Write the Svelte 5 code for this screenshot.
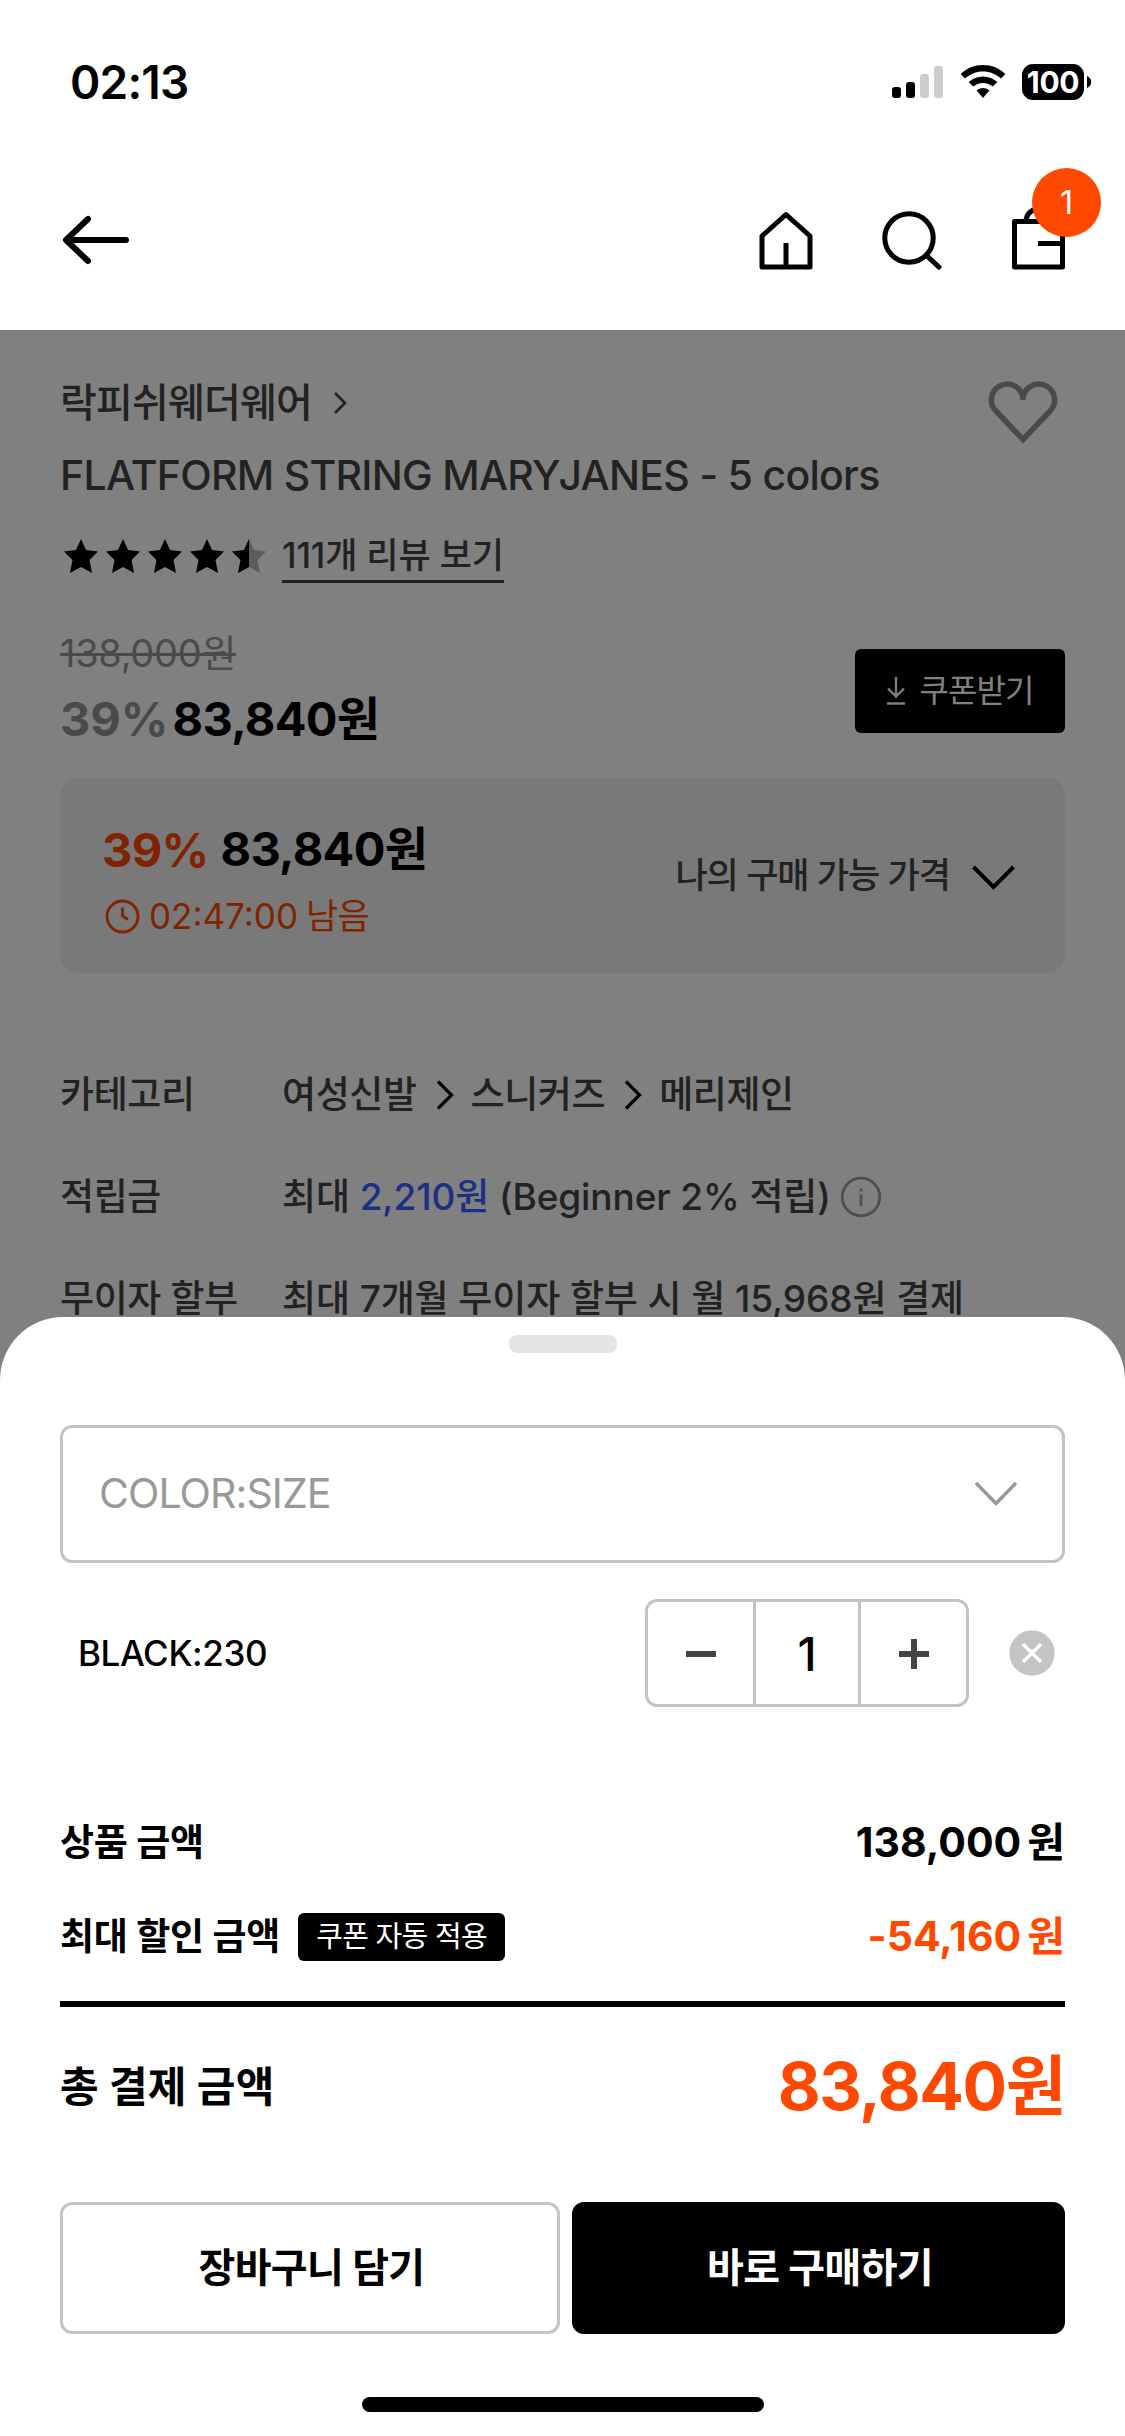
<script>
  const stars = [1, 1, 1, 1, 0.5];
  const categories = ['여성신발', '스니커즈', '메리제인'];
  let quantity = $state(1);
</script>

<div class="screen">
  <div class="status">
    <span class="time">02:13</span>
    <div class="status-icons">
      <svg width="52" height="36" viewBox="0 0 52 36">
        <rect x="0" y="23" width="9" height="11" rx="3" />
        <rect x="14" y="18" width="9" height="16" rx="3" />
        <rect x="28" y="10" width="9" height="24" rx="3" fill="#ccc" />
        <rect x="42" y="2" width="9" height="32" rx="3" fill="#ccc" />
      </svg>
      <svg class="wifi" width="46" height="36" viewBox="0 0 46 36">
        <path d="M23 1C14.500 1 6.500 4.300.700 9.900L5 14.600C9.700 10.200 16 7.500 23 7.500S36.300 10.200 41 14.600L45.300 9.900C39.500 4.300 31.500 1 23 1Z" />
        <path d="M23 12.500C17.500 12.500 12.500 14.600 8.700 18L13.200 22.600C15.800 20.300 19.200 18.900 23 18.900S30.200 20.300 32.800 22.600L37.300 18C33.500 14.600 28.500 12.500 23 12.500Z" />
        <path d="M23 24C20.500 24 18.300 24.900 16.600 26.500L23 34L29.400 26.500C27.700 24.900 25.500 24 23 24Z" />
      </svg>
      <span class="battery">100</span>
      <svg width="5" height="12" viewBox="0 0 5 12"><path d="M0 0C2.500 1 4.200 3 4.200 6S2.500 11 0 12Z" /></svg>
    </div>
  </div>

  <header class="nav">
    <svg class="line" width="70" height="52" viewBox="0 0 70 52">
      <path d="M28 5L6 26L28 47M7 26H66" stroke-width="6" stroke-linecap="round" stroke-linejoin="round" />
    </svg>
    <div class="nav-icons">
      <svg class="line" width="54" height="60" viewBox="0 0 54 60">
        <path d="M3 26L27 4.500L51 26V57H3ZM27 33V57" stroke-width="5" stroke-linejoin="round" />
      </svg>
      <svg class="line" width="62" height="60" viewBox="0 0 62 60">
        <circle cx="28" cy="28" r="24.200" stroke-width="5" />
        <path d="M45 45L59.500 58.500" stroke-width="5" />
      </svg>
      <div class="bag">
        <svg class="line" width="54" height="64" viewBox="0 0 54 64">
          <path d="M2.500 15.500H50.500V61H2.500ZM26 37.500H50M14 15C15 -1 38 -1 39 15" stroke-width="5" stroke-linejoin="round" />
        </svg>
        <span class="badge">1</span>
      </div>
    </div>
  </header>

  <main class="product">
    <div class="heading">
      <div>
        <div class="brand">
          <span>락피쉬웨더웨어</span>
          <svg class="line" width="16" height="26" viewBox="0 0 16 26"><path d="M3 3L13 13L3 23" stroke="#222" stroke-width="2.600" /></svg>
        </div>
        <h1>FLATFORM STRING MARYJANES - 5 colors</h1>
      </div>
      <svg class="line heart" width="72" height="66" viewBox="0 0 72 66">
        <path d="M36 20A15.800 15.800 0 1 0 9 31L36 59.500L63 31A15.800 15.800 0 1 0 36 20" stroke="#4a4a4a" stroke-width="5.500" />
      </svg>
    </div>

    <div class="rating">
      <div class="stars">
        {#each stars as fill}
          <svg width="34" height="34" viewBox="0 0 34 34">
            <path fill={fill < 1 ? '#5c5c5c' : '#000'} d="M17 0L22 11L34 12.500L25.500 21L28 34L17 28L6 34L8.500 21L0 12.500L12 11Z" />
            {#if fill < 1}<path d="M17 0V28L6 34L8.500 21L0 12.500L12 11Z" />{/if}
          </svg>
        {/each}
      </div>
      <a class="reviews" href="#reviews">111개 리뷰 보기</a>
    </div>

    <div class="price-row">
      <div>
        <div class="old-price">138,000원</div>
        <div class="price"><span class="rate">39%</span><span class="won">83,840원</span></div>
      </div>
      <button class="coupon">
        <svg class="line" width="20" height="30" viewBox="0 0 20 30"><path d="M10 1V20M2 12.500L10 20.500L18 12.500M1 27.500H19" stroke="#808080" stroke-width="2.300" /></svg>
        <span>쿠폰받기</span>
      </button>
    </div>

    <section class="deal">
      <div>
        <div class="deal-price"><span class="rate">39%</span><span class="won">83,840원</span></div>
        <div class="timer">
          <svg class="line" width="35" height="35" viewBox="0 0 35 35">
            <circle cx="17.500" cy="17.500" r="15.500" stroke="#802400" stroke-width="2.800" />
            <path d="M17.500 8.500V17L23 20.500" stroke="#802400" stroke-width="2.800" />
          </svg>
          <span>02:47:00</span><span class="left">남음</span>
        </div>
      </div>
      <div class="mine">
        <span>나의 구매 가능 가격</span>
        <svg class="line" width="44" height="28" viewBox="0 0 44 28"><path d="M1.500 4L21.500 24L41.500 4" stroke-width="4" /></svg>
      </div>
    </section>

    <dl class="info">
      <dt>카테고리</dt>
      <dd class="crumbs">
        {#each categories as name, i}
          {#if i > 0}
            <svg class="line" width="20" height="32" viewBox="0 0 20 32"><path d="M3 2.500L16.500 16L3 29.500" stroke-width="3.200" /></svg>
          {/if}
          <span>{name}</span>
        {/each}
      </dd>
      <dt>적립금</dt>
      <dd>
        <span>최대 <b>2,210원</b> (Beginner 2% 적립)</span>
        <svg class="line tip" width="42" height="42" viewBox="0 0 42 42">
          <circle cx="21" cy="21" r="18.800" stroke="#4f4f4f" stroke-width="2.800" />
          <path d="M21 18.500V30M21 12.500V15.500" stroke="#4f4f4f" stroke-width="2.800" />
        </svg>
      </dd>
      <dt>무이자 할부</dt>
      <dd>최대 7개월 무이자 할부 시 월 15,968원 결제</dd>
    </dl>
  </main>

  <section class="sheet">
    <div class="handle"></div>
    <div class="select">
      <span>COLOR:SIZE</span>
      <svg class="line" width="46" height="30" viewBox="0 0 46 30"><path d="M3 4L23 24.500L43 4" stroke="#999" stroke-width="3.500" /></svg>
    </div>

    <div class="option">
      <span class="option-name">BLACK:230</span>
      <div class="stepper">
        <button aria-label="minus" onclick={() => (quantity = Math.max(1, quantity - 1))}>
          <svg class="line" width="30" height="30" viewBox="0 0 30 30"><path d="M0 15H30" stroke="#444" stroke-width="6" /></svg>
        </button>
        <output>{quantity}</output>
        <button aria-label="plus" onclick={() => (quantity += 1)}>
          <svg class="line" width="30" height="30" viewBox="0 0 30 30"><path d="M0 15H30M15 0V30" stroke="#444" stroke-width="6" /></svg>
        </button>
      </div>
      <svg class="line remove" width="46" height="46" viewBox="0 0 46 46">
        <circle cx="23" cy="23" r="22.700" fill="#c4c4c4" />
        <path d="M14 14L32 32M32 14L14 32" stroke="#fff" stroke-width="3.500" />
      </svg>
    </div>

    <div class="sums">
      <div class="sum"><span class="label">상품 금액</span><span class="amount">138,000<i>원</i></span></div>
      <div class="sum">
        <span class="label">최대 할인 금액</span><span class="auto">쿠폰 자동 적용</span>
        <span class="amount orange">-54,160<i>원</i></span>
      </div>
    </div>
    <div class="total">
      <span class="total-label">총 결제 금액</span>
      <span class="total-amount">83,840원</span>
    </div>
    <div class="actions">
      <button class="cart">장바구니 담기</button>
      <button class="buy">바로 구매하기</button>
    </div>
    <div class="home-indicator"></div>
  </section>
</div>

<style>
  :global(body) {
    margin: 0;
    background: #fff;
  }
  .screen {
    width: 1125px;
    height: 2436px;
    overflow: hidden;
    display: flex;
    flex-direction: column;
    background: #fff;
    color: #000;
    font-family: Inter, 'Noto Sans CJK KR', sans-serif;
    line-height: 1.2;
    white-space: nowrap;
  }
  .screen * {
    box-sizing: border-box;
  }
  svg {
    display: block;
    flex: none;
  }
  .line {
    fill: none;
    stroke: #000;
  }
  button {
    font: inherit;
    color: inherit;
    letter-spacing: inherit;
    border: 0;
    padding: 0;
    margin: 0;
    background: none;
  }
  i {
    font-style: normal;
  }

  .status {
    height: 164px;
    padding: 0 33px 0 70px;
    display: flex;
    justify-content: space-between;
    align-items: center;
  }
  .time {
    padding-top: 2px;
    font-size: 46px;
    font-weight: 600;
    letter-spacing: -0.8px;
  }
  .status-icons {
    display: flex;
    align-items: center;
  }
  .wifi {
    margin: 0 16px;
  }
  .battery {
    width: 62px;
    height: 36px;
    margin-right: 3px;
    border-radius: 11px;
    background: #000;
    color: #fff;
    font-size: 30px;
    font-weight: 700;
    line-height: 36px;
    text-align: center;
    letter-spacing: -0.3px;
  }

  .nav {
    height: 166px;
    padding: 0 59px 14px 60px;
    display: flex;
    justify-content: space-between;
    align-items: center;
  }
  .nav-icons {
    display: flex;
    align-items: center;
  }
  .nav-icons > svg:nth-child(2) {
    margin: 0 69px 0 68px;
  }
  .bag {
    position: relative;
    margin-top: -4px;
  }
  .badge {
    position: absolute;
    left: 20px;
    top: -38px;
    width: 69px;
    height: 69px;
    border-radius: 50%;
    background: #ff4800;
    color: #fff;
    font-size: 32px;
    line-height: 69px;
    text-align: center;
  }

  .product {
    height: 1050px;
    flex: none;
    padding: 43px 60px 0;
    background: #808080;
    color: #222;
    font-weight: 500;
  }
  .heading {
    display: flex;
    justify-content: space-between;
    align-items: flex-start;
  }
  .brand {
    height: 60px;
    display: flex;
    align-items: center;
    gap: 20px;
    font-size: 40px;
    letter-spacing: -0.8px;
  }
  h1 {
    margin: 12px 0 0;
    font-size: 41px;
    font-weight: 500;
    line-height: 60px;
    letter-spacing: -0.72px;
  }
  .heart {
    margin: 7px 6px 0 0;
  }
  .rating {
    height: 60px;
    margin-top: 20px;
    padding-left: 4px;
    display: flex;
  }
  .stars {
    display: flex;
    gap: 8px;
    margin: 14px 16px 0 0;
  }
  .reviews {
    height: 58px;
    border-bottom: 3px solid #222;
    color: inherit;
    text-decoration: none;
    font-size: 35px;
    line-height: 61px;
    letter-spacing: -0.15px;
  }
  .price-row {
    margin-top: 43px;
    display: flex;
    justify-content: space-between;
    align-items: flex-start;
    font-weight: 400;
  }
  .old-price {
    color: #4a4a4a;
    font-size: 38px;
    line-height: 50px;
    letter-spacing: -0.3px;
    text-decoration: line-through;
    text-decoration-thickness: 3px;
  }
  .price,
  .deal-price {
    color: #000;
    font-size: 47px;
    font-weight: 700;
    line-height: 60px;
    display: flex;
  }
  .won {
    letter-spacing: -0.7px;
  }
  .price {
    margin-top: 11px;
    gap: 4px;
  }
  .price .rate {
    color: #4a4a4a;
  }
  .coupon {
    width: 210px;
    height: 84px;
    margin-top: 21px;
    border-radius: 6px;
    background: #000;
    color: #808080;
    display: flex;
    justify-content: center;
    align-items: center;
    gap: 13px;
    font-size: 32px;
    letter-spacing: -0.9px;
  }
  .deal {
    height: 195px;
    margin-top: 29px;
    padding: 41px 49px 0 42px;
    border-radius: 18px;
    background: #797979;
    display: flex;
    justify-content: space-between;
    align-items: flex-start;
  }
  .deal-price {
    gap: 12px;
  }
  .deal .rate {
    padding-top: 1px;
    color: #802400;
    letter-spacing: -0.7px;
  }
  .timer {
    height: 50px;
    margin-top: 11px;
    padding-left: 3px;
    display: flex;
    align-items: center;
    color: #802400;
    font-size: 35px;
    font-weight: 400;
  }
  .timer svg {
    margin-right: 9px;
  }
  .left {
    margin-left: 8px;
    letter-spacing: -0.8px;
  }
  .mine {
    height: 112px;
    display: flex;
    align-items: center;
    gap: 22px;
    font-size: 35px;
    letter-spacing: -1px;
  }
  .mine svg {
    margin-top: 4px;
  }
  .info {
    margin: 71px 0 0;
    display: grid;
    grid-template-columns: 222px 1fr;
    grid-auto-rows: 102px;
    align-items: center;
    font-size: 37px;
    letter-spacing: -0.4px;
  }
  .info dd {
    margin: 0;
    display: flex;
    align-items: center;
    letter-spacing: -0.1px;
  }
  .info .crumbs {
    letter-spacing: -0.4px;
  }
  .info b {
    font-weight: 500;
    color: #1c2f80;
  }
  .crumbs svg {
    margin: 0 16px 0 18px;
  }
  .tip {
    margin-left: 9px;
  }

  .sheet {
    position: relative;
    height: 1119px;
    flex: none;
    margin-top: -63px;
    padding: 18px 60px 0;
    border-radius: 63px 63px 0 0;
    background: #fff;
  }
  .handle {
    width: 108px;
    height: 18px;
    margin: 0 auto;
    border-radius: 8px;
    background: #e4e4e4;
  }
  .select {
    height: 138px;
    margin-top: 72px;
    padding: 0 43px 0 36px;
    border: 3px solid #c4c4c4;
    border-radius: 12px;
    display: flex;
    justify-content: space-between;
    align-items: center;
    color: #999;
    font-size: 41px;
    letter-spacing: -0.9px;
  }
  .option {
    height: 108px;
    margin-top: 36px;
    padding: 0 10px 0 18px;
    display: flex;
    align-items: center;
  }
  .option-name {
    flex: 1;
    font-size: 35px;
    font-weight: 500;
    letter-spacing: -0.4px;
  }
  .stepper {
    width: 324px;
    height: 108px;
    border: 3px solid #c4c4c4;
    border-radius: 12px;
    display: grid;
    grid-template-columns: 105px 108px 1fr;
  }
  .stepper button {
    display: grid;
    place-items: center;
  }
  .stepper output {
    border: solid #c4c4c4;
    border-width: 0 3px;
    font-size: 46px;
    font-weight: 500;
    line-height: 104px;
    text-align: center;
  }
  .remove {
    margin-left: 40px;
  }
  .remove circle {
    stroke: none;
  }
  .sums {
    margin-top: 88px;
    padding-bottom: 18px;
    border-bottom: 6px solid #000;
  }
  .sum {
    height: 94px;
    padding-top: 2px;
    display: flex;
    align-items: center;
  }
  .label {
    font-size: 37px;
    font-weight: 700;
    letter-spacing: -0.2px;
  }
  .auto {
    height: 48px;
    margin-left: 18px;
    padding: 0 18px;
    border-radius: 6px;
    background: #000;
    color: #fff;
    font-size: 29px;
    line-height: 47px;
    letter-spacing: -0.7px;
  }
  .amount {
    margin-left: auto;
    font-size: 41px;
    font-weight: 700;
  }
  .amount i {
    margin-left: 6px;
  }
  .orange,
  .total-amount {
    color: #ff4800;
  }
  .total {
    height: 160px;
    display: flex;
    justify-content: space-between;
    align-items: center;
    font-weight: 700;
  }
  .total-label {
    font-size: 42px;
    letter-spacing: 0.2px;
  }
  .total-amount {
    font-size: 66px;
    letter-spacing: -1.4px;
  }
  .actions {
    height: 132px;
    margin-top: 35px;
    display: flex;
    gap: 12px;
    font-size: 40px;
    font-weight: 700;
    letter-spacing: -0.6px;
  }
  .actions button {
    padding-left: 3px;
  }
  .cart {
    width: 500px;
    border: 3px solid #c4c4c4;
    border-radius: 12px;
  }
  .buy {
    flex: 1;
    border-radius: 12px;
    background: #000;
    color: #fff;
  }
  .home-indicator {
    width: 402px;
    height: 15px;
    margin: 63px auto 0;
    border-radius: 8px;
    background: #000;
  }
</style>
